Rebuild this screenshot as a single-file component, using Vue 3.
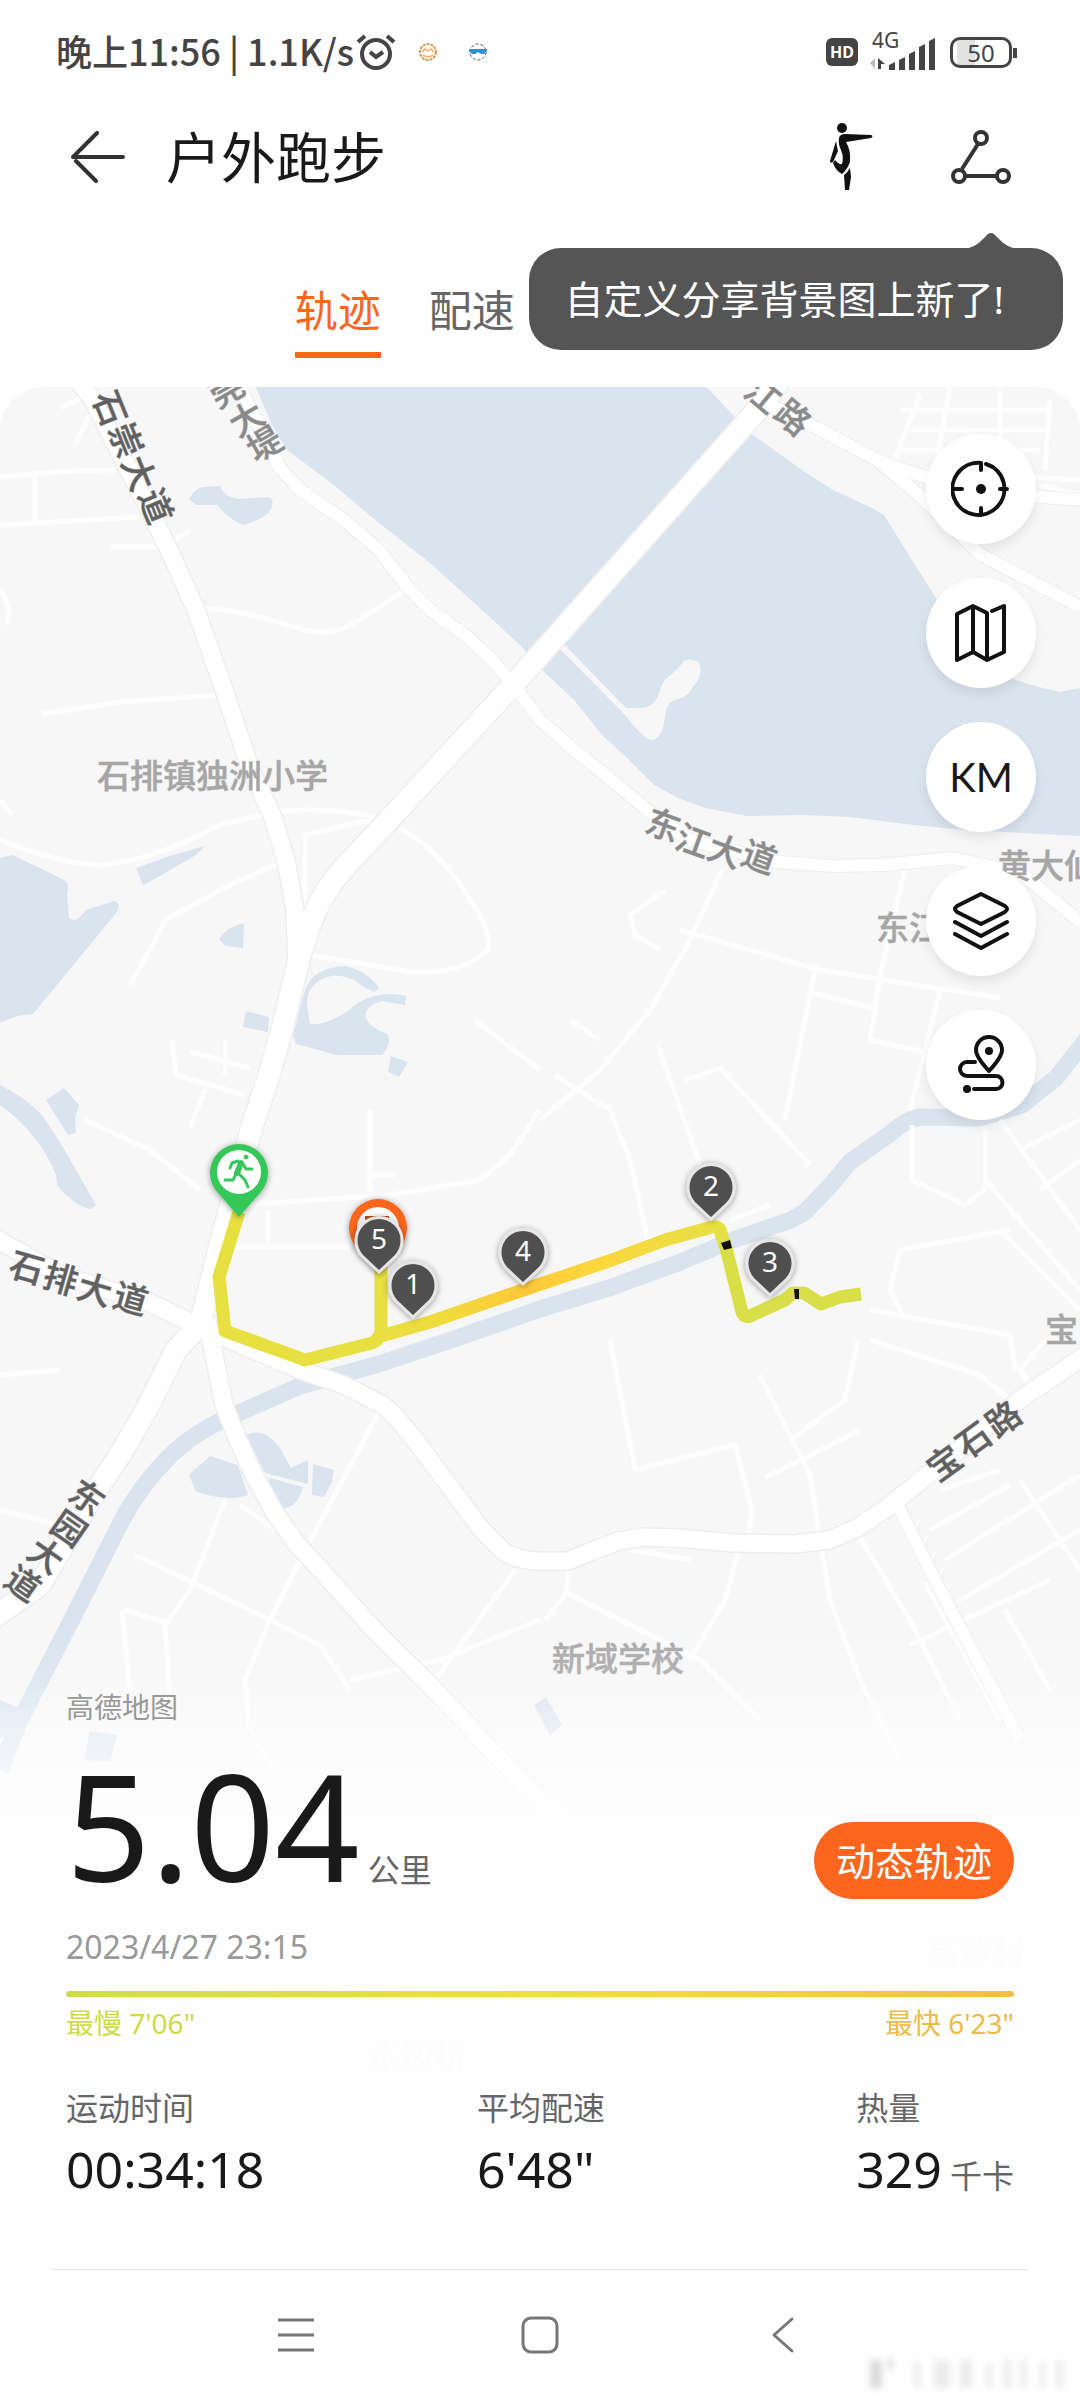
<script setup>
import { ref } from 'vue';

const tabs = ['轨迹', '配速'];
const activeTab = ref('轨迹');

const stats = [
  { label: '运动时间', value: '00:34:18', unit: '' },
  { label: '平均配速', value: '6\'48"', unit: '' },
  { label: '热量', value: '329', unit: '千卡' }
];

// Street names: one centre point per glyph, and the angle the glyphs are turned by
const streets = [
  { text: '石崇大道', angle: 68, tone: 'dark', points: [[110, 408], [126, 440], [139, 473], [156, 506]] },
  { text: '莞大堤', angle: -30, tone: 'mid', points: [[226, 389], [246, 418], [264, 443]] },
  { text: '江路', angle: 40, tone: 'mid', points: [[763, 395], [793, 417]] },
  { text: '东江大道', angle: 20, tone: 'mid', points: [[663, 825], [693, 841], [725, 851], [759, 857]] },
  { text: '石排大道', angle: 16, tone: 'dark', points: [[27, 1267], [61, 1278], [95, 1289], [131, 1298]] },
  { text: '东园大道', angle: 35, tone: 'dark', points: [[87, 1497], [69, 1528], [46, 1555], [23, 1583]] },
  { text: '宝石路', angle: -36, tone: 'dark', points: [[944, 1463], [973, 1440], [1003, 1419]] }
];

const places = [
  { text: '石排镇独洲小学', x: 97, y: 788 },
  { text: '新域学校', x: 552, y: 1671 },
  { text: '黄大仙', x: 998, y: 878 },
  { text: '东江', x: 876, y: 940 },
  { text: '宝', x: 1045, y: 1342 },
  { text: '水边桥', x: 368, y: 2067, faint: true },
  { text: '高埗村', x: 926, y: 1964, faint: true }
];

const pins = [
  { n: 4, x: 523, y: 1252 },
  { n: 2, x: 711, y: 1187 },
  { n: 3, x: 770, y: 1263 },
  { n: 1, x: 413, y: 1285 },
  { n: 5, x: 379, y: 1240 }
];

const glyphSize = 34;

// Turns glyph centres into baseline starting points
const origins = (street, axis) => {
  const a = street.angle * Math.PI / 180;
  const dx = -glyphSize / 2;
  const dy = glyphSize * 0.38;
  return street.points.map(([x, y]) => Math.round(axis === 'x'
    ? x + dx * Math.cos(a) - dy * Math.sin(a)
    : y + dx * Math.sin(a) + dy * Math.cos(a))).join(' ');
};
</script>

<template>
  <div class="screen">
    <div class="status-bar">
      <div class="status-left">
        <span class="clock">晚上11:56 | 1.1K/s</span>
        <svg class="alarm" viewBox="0 0 40 40" width="40" height="40">
          <circle cx="20" cy="22" r="14" fill="none" stroke="#444" stroke-width="4" />
          <path d="M14 20l6 5 7-5M2 10l7-6M38 10l-7-6" fill="none" stroke="#444" stroke-width="4" />
        </svg>
        <svg class="app-dot" viewBox="0 0 20 20" width="20" height="20">
          <circle cx="10" cy="10" r="8" fill="#fffaf4" stroke="#d99a55" stroke-width="2" stroke-dasharray="3 1" />
          <path d="M4 10l3-3 3 2 3-2 3 3M5 13q5 4 10 0" fill="none" stroke="#efb070" stroke-width="1.5" />
        </svg>
        <svg class="app-dot" viewBox="0 0 20 20" width="20" height="20">
          <circle cx="10" cy="10" r="8" fill="#fff" stroke="#556" stroke-width="1" stroke-dasharray="3 2" />
          <path d="M1 7h18v2l-3 3h-3l-3-2-3 2H4L1 9z" fill="#2d93cf" />
        </svg>
      </div>
      <div class="status-right">
        <span class="hd">HD</span>
        <span class="network">
          <span class="network-type">4G</span>
          <svg viewBox="0 0 66 38" width="66" height="38">
            <path d="M0 30l5-5v11z" fill="#bbb" />
            <path d="M8 25l7 6h-4v5H8z" fill="#444" />
            <path d="M19 32l6-3v8h-6zM29 27l6-3v13h-6zM39 21l6-3v19h-6zM49 14l6-3v26h-6zM59 8l6-3v32h-6z" fill="#444" />
          </svg>
        </span>
        <span class="battery">50</span>
      </div>
    </div>

    <header class="title-bar">
      <button class="icon-button" aria-label="返回">
        <svg viewBox="0 0 56 52" width="56" height="52">
          <path d="M53 26H3L27 2M6 30l20 20" fill="none" stroke="#333" stroke-width="4" stroke-linecap="round" stroke-linejoin="round" />
        </svg>
      </button>
      <h1>户外跑步</h1>
      <button class="icon-button" aria-label="舞者">
        <svg viewBox="0 0 44 68" width="44" height="68">
          <g fill="#111">
            <circle cx="12" cy="5" r="5" />
            <path d="M9 15q1-4 6-4l26 1q3 1 0 3L16 19q5 8 4 20-3 8-8 12-6-3-9-11l2-3q4 5 7 4 2-7-1-14-3-6-2-12z" />
            <path d="M6 18q1 6 2 10L3 39q-3 2-3-1z" />
            <path d="M20 45l1 9-2 13h-4l-1-15q4-3 6-7z" />
          </g>
        </svg>
      </button>
      <button class="icon-button share" aria-label="分享">
        <svg viewBox="0 0 62 56" width="62" height="56">
          <path d="M28 15L12 40M16 47h30" fill="none" stroke="#333" stroke-width="4" />
          <g fill="#fff" stroke="#333" stroke-width="4">
            <circle cx="31" cy="9" r="6" />
            <circle cx="9" cy="47" r="6" />
            <circle cx="53" cy="47" r="6" />
          </g>
        </svg>
      </button>
    </header>

    <nav class="tabs">
      <button
        v-for="tab in tabs"
        :key="tab"
        :class="['tab', { active: tab === activeTab }]"
        @click="activeTab = tab"
      >{{ tab }}</button>
      <div class="tooltip">
        <svg viewBox="0 0 56 16" width="56" height="16">
          <path d="M0 16Q12 15 20 6L25 1Q28-1 31 1L36 6Q44 15 56 16Z" fill="#555" />
        </svg>
        自定义分享背景图上新了!
      </div>
    </nav>

    <main class="map-area">
      <svg class="map" viewBox="0 387 1080 1883" preserveAspectRatio="xMidYMin slice">
        <defs>
          <linearGradient id="pace" gradientUnits="userSpaceOnUse" x1="381" y1="0" x2="721" y2="0">
            <stop offset="0" stop-color="#e8e040" />
            <stop offset="0.22" stop-color="#f2d93c" />
            <stop offset="0.42" stop-color="#fdc838" />
            <stop offset="0.62" stop-color="#fdd63c" />
            <stop offset="1" stop-color="#e6e044" />
          </linearGradient>
          <filter id="pin-shadow" x="-30%" y="-30%" width="160%" height="160%">
            <feDropShadow dx="0" dy="1" stdDeviation="3" flood-color="#000" flood-opacity="0.4" />
          </filter>
        </defs>

        <!-- water -->
        <g fill="#d9e4ef">
          <path d="M252 380L257 390 272 425 287 450 330 482 379 523 430 563 482 610 520 645 540 668 574 700 602 735 626 757 654 785 678 798 705 808 747 816 802 815 850 817 905 824 953 829 1022 833 1080 836V688L1060 692 1039 687 1015 680 975 645 936 598 912 560 884 515 872 508 833 490 805 472 753 435 733 415 700 380Z" />
          <path d="M189 499Q196 487 203 487L220 486Q224 497 238 499L269 497Q274 500 272 507 268 518 244 525 232 522 217 505L196 505Z" />
          <path d="M0 858L12 855 40 868 64 880Q70 884 67 894L69 918Q76 924 86 910L114 901Q122 903 117 912L33 1014 17 1016 0 1023Z" />
          <path d="M136 868L170 856 205 846 196 855 160 876 143 885Z" />
          <path d="M219 939Q228 926 244 923L243 948 225 946ZM246 1011L269 1017 268 1032 243 1027Z" />
          <path fill-rule="evenodd" d="M293 1035L305 990Q312 968 345 966 366 970 379 988L374 992 362 986Q350 974 331 976 306 982 307 1006L310 1024Q330 1026 358 1003 380 990 406 996L405 1005 382 1001Q363 1006 366 1018 370 1028 387 1034 393 1042 382 1055L337 1055 296 1044Z" />
          <path d="M391 1056L408 1062 399 1077 388 1072Z" />
          <path d="M0 1085Q26 1098 42 1115L60 1142 96 1205 91 1209Q74 1206 57 1185L56 1175Q40 1134 0 1105ZM46 1100L64 1088 79 1105 75 1118 76 1133 68 1135Z" />
          <path d="M189 1475L210 1456 238 1465 248 1495Q230 1502 196 1492ZM246 1435Q264 1426 280 1448L291 1468 308 1460V1484L265 1473ZM270 1478L303 1487Q298 1508 282 1508L265 1490ZM313 1464L334 1470 332 1482 324 1497 312 1495Z" />
          <path d="M90 1731L117 1735 110 1762 84 1760ZM534 1705L546 1697 562 1725 550 1735ZM0 1700L18 1708 8 1735 0 1738Z" />
          <path d="M60 2090l40-6 10 40-42 6z" />
        </g>
        <path class="canal" d="M1090 1035L1056 1078 1022 1105 980 1118 919 1117Q902 1122 895 1130L850 1162 829 1187 805 1212 791 1220 733 1240 678 1263 609 1288 540 1309 448 1341 379 1364 300 1386 241 1412Q200 1428 172 1454 140 1485 120 1524L69 1625 20 1720 0 1770" />
        <path fill="#f8f7f8" d="M560 640L626 708 643 708Q656 706 660 690 662 680 672 674L681 665Q686 656 698 662 703 667 698 680L691 690Q686 698 674 700 666 704 665 716 663 738 652 740 644 740 626 716L556 645Z" />

        <!-- minor roads -->
        <g class="lanes">
          <path d="M0 477Q60 470 115 470M0 525L140 517M35 477V525M110 547H158L190 532M42 714L120 702 222 695M60 408L88 395M75 445L90 415M0 590Q14 610 6 625M0 800L12 815" />
          <path d="M205 608Q250 612 290 626 330 640 355 622L408 588" />
          <path d="M0 840Q60 864 100 865 150 862 220 825L276 812Q330 805 385 820L360 822 305 835V940M400 828Q440 850 470 900 492 930 488 950 460 975 410 972L310 955" />
          <path d="M285 860L230 885 165 920 150 950 130 985M172 1040L176 1075 245 1095M190 1052L250 1068M225 1040V1075M205 1090L190 1128M475 1020L540 1070M85 1120L150 1150 200 1190M370 1110V1200M370 1175H395M240 1205L390 1195 480 1180 510 1155 540 1110M235 1247H350M268 1210V1245" />
          <path d="M722 870L690 940 650 1010 600 1070 540 1120M665 890L630 915 635 935 660 950M680 930L820 970 1000 998M905 870L880 975 870 1040 925 1052M816 965L785 1120M810 992L872 1008M570 1020L600 1040M555 1075L610 1110 630 1160 648 1240M658 1045L700 1165M685 1080L720 1068 810 1165M940 990L910 1110M730 1220L770 1205M912 1125V1180L965 1205 985 1190V1130" />
          <path d="M870 1310L1010 1335 1015 1370M905 1320L890 1290 900 1250 1010 1230M610 1340L635 1470 735 1445 752 1510 747 1545M760 1375L810 1475 830 1600 860 1680 900 1760M858 1340L845 1400 790 1440M765 1478L860 1430M740 1545L725 1600 690 1660M985 1180L1080 1290M870 1340L980 1375 1010 1400" />
          <path d="M570 1565L565 1595 545 1620M565 1592L700 1660 760 1720M858 1535L910 1620 960 1720M930 1530L1010 1485M945 1560L1080 1475M960 1600L1080 1530M910 1645L1050 1580M1020 1480L1080 1570M925 1582L1000 1720M1005 1610L1050 1690M940 1490L1000 1470M630 1550L690 1560" />
          <path d="M380 1410L300 1560 270 1620 245 1680 250 1730 280 1780M225 1500L190 1590 165 1625 170 1700M135 1555L250 1610 320 1645 350 1690M125 1610L165 1622M122 1610L130 1690M0 1510L60 1525M540 1620L440 1660 350 1680M515 1570L435 1680M240 1505L290 1540M60 1370L0 1375" />
          <path d="M920 395L890 470M900 410H1050M910 430H1050M900 450H1040M1000 387V470M950 387L935 470M1050 400L1045 470M1040 485L1080 495M905 470L1080 480" />
          <path d="M1000 1120L1080 1230M1020 1150L1080 1120M1040 1190L1080 1160M1000 1230L1080 1310M1045 1340L1020 1370 1040 1400" />
        </g>

        <!-- main roads: edge line first, white carriageway over it -->
        <g v-for="layer in ['edge', 'fill']" :key="layer" :class="['roads', layer]">
          <path class="thin" d="M240 387L279 467 300 490 344 520 379 550 406 585 430 610 465 635 492 660 513 685 540 720 574 750 609 778 650 812 690 840 778 862 833 866 884 865 953 858 1022 874 1090 930" />
          <path class="thin" d="M760 400L815 427 877 460 919 495 981 555 1029 580 1090 612M877 460Q960 495 1090 500" />
          <path class="thin" d="M895 1500L940 1590 1020 1740" />
          <path class="mid" d="M-10 1235L60 1275 148 1302 200 1327 300 1370 344 1385 379 1403Q395 1412 430 1460L482 1530 499 1547Q510 1560 540 1561L568 1561 592 1551 619 1541 643 1537 678 1538 733 1543 795 1544 829 1540 857 1528 884 1510 919 1482 1022 1398 1090 1352" />
          <path class="mid" d="M78 380L93 400 152 515 169 550 196 610 224 690 251 770 272 815 286 860 295 910 297 970" />
          <path class="wide" d="M780 380L760 407 513 685 386 823 344 868Q320 895 310 925L300 955 282 1030 269 1075 251 1130 239 1175 220 1245 200 1325 176 1350 145 1412 120 1455 93 1495 40 1585 -10 1620" />
          <path class="mid" d="M207 1320L217 1370 224 1405 238 1440 255 1477 275 1513 296 1543 327 1577 379 1635 430 1685 482 1740 570 1830" />
        </g>

        <!-- labels -->
        <text
          v-for="place in places"
          :key="place.text"
          :class="['place', { faint: place.faint }]"
          :x="place.x"
          :y="place.y"
        >{{ place.text }}</text>
        <text
          v-for="street in streets"
          :key="street.text"
          :class="['street', street.tone]"
          :x="origins(street, 'x')"
          :y="origins(street, 'y')"
          :rotate="street.angle"
        >{{ street.text }}</text>

        <!-- run track -->
        <g fill="none" stroke-width="13" stroke-linejoin="round">
          <path d="M239 1212L219 1277 225 1331 305 1360 372 1343Q380 1340 381 1330V1265" stroke="#e8e040" />
          <path d="M381 1336L430 1322 523 1290 609 1261 665 1240 712 1227Q720 1226 721 1233L725 1246" stroke="url(#pace)" />
          <path d="M724 1240L742 1312Q744 1318 750 1316L785 1300 793 1293H804L821 1304 840 1297 861 1294" stroke="#d9df48" />
        </g>
        <path d="M721 1243l9-3 2 8-8 2zM794 1289h5v10h-4z" fill="#111" />

        <!-- start and finish -->
        <g filter="url(#pin-shadow)">
          <path d="M239 1217L218 1193A29 29 0 1 1 260 1193Z" fill="#35c759" />
          <circle cx="239" cy="1172" r="22" fill="#fff" />
          <path d="M378 1272L357 1248A29 29 0 1 1 399 1248Z" fill="#fb651e" />
          <circle cx="378" cy="1228" r="21" fill="#fff" />
          <path d="M365 1216h24v14h-24z" fill="#c44a1c" />
        </g>
        <g stroke="#35c759" fill="none" stroke-linecap="round" stroke-linejoin="round">
          <circle cx="246" cy="1157" r="2" fill="#35c759" stroke-width="1" />
          <path d="M241 1163L237 1173" stroke-width="6" />
          <path d="M238 1161L232 1163 230 1168M243 1164L246 1169 252 1169M236 1174L233 1180 225 1180M239 1174L245 1180 248 1187" stroke-width="3" />
        </g>

        <g v-for="pin in pins" :key="pin.n">
          <path
            :d="`M${pin.x} ${pin.y + 32}l-17-16a23 23 0 1 1 34 0z`"
            class="pin"
            filter="url(#pin-shadow)"
          />
          <text class="pin-text" :x="pin.x" :y="pin.y + 9">{{ pin.n }}</text>
        </g>
      </svg>

      <div class="tools">
        <button class="tool" aria-label="定位">
          <svg viewBox="0 0 60 60" width="60" height="60">
            <path d="M35 5A26 26 0 1 1 30 4V11M4 30h7M49 30h7M30 49v7" />
            <circle cx="30" cy="30" r="5" fill="#111" stroke="none" />
          </svg>
        </button>
        <button class="tool" aria-label="地图">
          <svg viewBox="0 0 56 60" width="56" height="60">
            <path d="M4 11L20 3 34 10V57L20 49 4 57ZM20 3V49M39 8L51 3V49L34 57" />
          </svg>
        </button>
        <button class="tool km">KM</button>
        <button class="tool" aria-label="图层">
          <svg viewBox="0 0 56 60" width="56" height="60">
            <path d="M28 3L52 15Q56 18 52 21L28 33 4 21Q0 18 4 15ZM2 31L28 45 54 31M2 43L28 57 54 43" />
          </svg>
        </button>
        <button class="tool" aria-label="路线">
          <svg viewBox="0 0 56 60" width="56" height="60">
            <path d="M36 36Q23 22 23 15A13 13 0 0 1 49 15Q49 22 36 36ZM22 27H14A6 6 0 0 0 14 41H43A6 6 0 0 1 43 54H21" />
            <circle cx="36" cy="16" r="4" fill="#111" stroke="none" />
            <circle cx="14" cy="54" r="4" fill="#111" stroke="none" />
          </svg>
        </button>
      </div>

      <section class="summary">
        <p class="provider">高德地图</p>
        <div class="distance-row">
          <p class="distance"><span class="distance-value">5.04</span><span class="unit">公里</span></p>
          <button class="replay">动态轨迹</button>
        </div>
        <p class="date">2023/4/27 23:15</p>
        <div class="pace-bar"></div>
        <div class="pace-labels">
          <span class="slow">最慢 7'06"</span>
          <span class="fast">最快 6'23"</span>
        </div>
        <dl class="stats">
          <div v-for="stat in stats" :key="stat.label">
            <dt>{{ stat.label }}</dt>
            <dd>{{ stat.value }}<span v-if="stat.unit" class="unit">{{ stat.unit }}</span></dd>
          </div>
        </dl>
      </section>
    </main>

    <footer class="system-nav">
      <button class="icon-button" aria-label="菜单">
        <svg viewBox="0 0 40 40" width="40" height="40">
          <path d="M2 5h36M2 20h36M2 35h36" fill="none" stroke="#777" stroke-width="3" />
        </svg>
      </button>
      <button class="icon-button" aria-label="主页">
        <svg viewBox="0 0 40 40" width="40" height="40">
          <rect x="3" y="3" width="34" height="34" rx="8" fill="none" stroke="#777" stroke-width="3" />
        </svg>
      </button>
      <button class="icon-button" aria-label="后退">
        <svg viewBox="0 0 40 40" width="40" height="40">
          <path d="M28 4L10 20 28 36" fill="none" stroke="#777" stroke-width="3" stroke-linecap="round" stroke-linejoin="round" />
        </svg>
      </button>
      <svg class="smudge" viewBox="0 0 210 36" width="210" height="36">
        <path fill="#dcdcdc" d="M8 4h12v28H8zM26 2h5v12h-5z" />
        <path fill="#ececec" d="M52 6h6v26h-6zM72 4h16v28H72zM98 4h12v28H98zM124 8h6v24h-6zM142 4h7v28h-7zM158 4h6v28h-6zM178 6h5v26h-5zM194 4h7v28h-7z" />
      </svg>
    </footer>
  </div>
</template>

<style>
body {
  margin: 0;
  background: #fefefe;
}
</style>

<style scoped>
.screen {
  display: flex;
  flex-direction: column;
  min-height: 100vh;
  background: #fefefe;
  color: #191919;
  font-family: "Noto Sans", "Noto Sans CJK SC", sans-serif;
}

button {
  padding: 0;
  border: 0;
  background: none;
  color: inherit;
  font: inherit;
  cursor: pointer;
}

svg {
  display: block;
}

p,
dl,
dd,
h1 {
  margin: 0;
}

/* Status bar */
.status-bar {
  display: flex;
  justify-content: space-between;
  align-items: center;
  padding: 32px 68px 0 56px;
  line-height: 40px;
  color: #444;
}

.status-left,
.status-right {
  display: flex;
  align-items: center;
}

.clock {
  font-family: "Noto Sans CJK SC", sans-serif;
  font-size: 36px;
  font-weight: 500;
  line-height: 36px;
  padding-bottom: 4px;
}

.alarm {
  margin-left: 2px;
}

.app-dot {
  margin-left: 22px;
}

.app-dot + .app-dot {
  margin-left: 30px;
}

.hd {
  padding: 0 4px;
  border-radius: 6px;
  background: #444;
  color: #fff;
  font-size: 16px;
  font-weight: 700;
  line-height: 28px;
}

.network {
  position: relative;
  margin: 0 14px 0 12px;
}

.network-type {
  position: absolute;
  top: -3px;
  left: 2px;
  font-size: 21px;
  line-height: 20px;
}

.battery {
  position: relative;
  width: 56px;
  border: 3px solid #444;
  border-radius: 10px;
  background: linear-gradient(90deg, #fff 4px, #e2e2e2 4px, #e2e2e2 40%, #fff 40%);
  font-size: 24px;
  line-height: 25px;
  text-align: center;
}

.battery::after {
  content: "";
  position: absolute;
  top: 8px;
  right: -8px;
  width: 4px;
  height: 10px;
  background: #444;
}

/* Title bar */
.title-bar {
  display: flex;
  align-items: center;
  gap: 40px;
  padding: 44px 68px 0 70px;
  height: 82px;
}

.title-bar h1 {
  flex: 1;
  font-size: 55px;
  font-weight: 400;
  line-height: 80px;
}

.title-bar .share {
  margin-left: 36px;
}

/* Tabs */
.tabs {
  position: relative;
  display: flex;
  gap: 48px;
  padding: 80px 0 29px 27.3%;
}

.tab {
  padding-bottom: 8px;
  border-bottom: 6px solid transparent;
  color: #666;
  font-size: 43px;
  line-height: 66px;
}

.tab.active {
  border-image: linear-gradient(#fb651e, #fb651e) 6;
  color: #fb651e;
}

.tooltip {
  position: absolute;
  top: 50px;
  right: 17px;
  padding: 0 59px 0 36px;
  border-radius: 32px;
  background: #555;
  color: #fff;
  font-size: 39px;
  line-height: 102px;
}

.tooltip svg {
  position: absolute;
  top: -15px;
  right: 44px;
}

/* Map */
.map-area {
  position: relative;
  display: flex;
  flex: 1;
  flex-direction: column;
  justify-content: space-between;
  overflow: hidden;
  border-radius: 44px 44px 0 0;
  background: #f8f7f8;
}

.map {
  position: absolute;
  inset: 0;
  width: 100%;
  height: 100%;
}

.canal {
  fill: none;
  stroke: #d9e4ef;
  stroke-width: 17;
  stroke-linejoin: round;
}

.lanes {
  fill: none;
  stroke: #fdfdfd;
  stroke-width: 5;
  stroke-linejoin: round;
}

.roads {
  fill: none;
  stroke-linejoin: round;
}

.roads.edge {
  stroke: #eee;
}

.roads.fill {
  stroke: #fff;
}

.edge .thin {
  stroke-width: 14;
}

.edge .mid {
  stroke-width: 20;
}

.edge .wide {
  stroke-width: 24;
}

.fill .thin {
  stroke-width: 12;
}

.fill .mid {
  stroke-width: 17;
}

.fill .wide {
  stroke-width: 21;
}

.place,
.street {
  font-family: "Noto Sans CJK SC", sans-serif;
  font-weight: 500;
  stroke-width: 1;
  stroke-opacity: 0.5;
}

.place {
  fill: #a6a6a6;
  stroke: #a6a6a6;
  font-size: 33px;
}

.place.faint {
  fill: #c4c4c4;
  stroke: #c4c4c4;
}

.street {
  font-size: 34px;
}

.street.dark {
  fill: #606060;
  stroke: #606060;
}

.street.mid {
  fill: #8a8a8a;
  stroke: #8a8a8a;
}

.pin {
  fill: #505050;
  stroke: #e6e6e6;
  stroke-width: 3;
}

.pin-text {
  fill: #fff;
  font-size: 28px;
  text-anchor: middle;
}

.tools {
  position: relative;
  display: flex;
  flex-direction: column;
  align-items: flex-end;
  gap: 34px;
  padding: 47px 44px;
}

.tool {
  display: flex;
  align-items: center;
  justify-content: center;
  width: 110px;
  height: 110px;
  border-radius: 50%;
  background: #fff;
  box-shadow: 0 6px 12px rgba(0, 0, 0, 0.08);
}

.tool svg {
  fill: none;
  stroke: #111;
  stroke-width: 4;
  stroke-linecap: round;
  stroke-linejoin: round;
}

.tool.km {
  font-family: Lato, sans-serif;
  font-size: 40px;
}

/* Summary */
.summary {
  position: relative;
  padding: 70px 66px 64px;
  background: linear-gradient(rgba(254, 254, 254, 0), rgba(254, 254, 254, 0.15) 60px, rgba(254, 254, 254, 0.6) 130px, rgba(254, 254, 254, 0.92) 200px, rgba(254, 254, 254, 0.96) 280px);
}

.provider {
  color: #999;
  font-size: 28px;
  line-height: 40px;
}

.distance-row {
  display: flex;
  align-items: center;
  justify-content: space-between;
}

.distance {
  display: flex;
  align-items: baseline;
}

.distance-value {
  font-size: 148px;
  line-height: 196px;
}

.unit {
  margin-left: 8px;
  color: #666;
  font-size: 32px;
  line-height: 40px;
}

.replay {
  margin-top: 70px;
  padding: 0 22px;
  border-radius: 39px;
  background: #fb651e;
  color: #fff;
  font-size: 39px;
  line-height: 77px;
}

.date {
  color: #999;
  font-size: 32px;
  line-height: 48px;
}

.pace-bar {
  height: 6px;
  margin: 20px 0 8px;
  border-radius: 3px;
  background: linear-gradient(90deg, #cddc50, #f0e040 50%, #f5bd45);
}

.pace-labels {
  display: flex;
  justify-content: space-between;
  font-size: 28px;
  line-height: 36px;
}

.slow {
  color: #cddc45;
}

.fast {
  color: #efbb45;
}

.stats {
  display: grid;
  grid-template-columns: 13fr 12fr auto;
  margin-top: 42px;
}

.stats dt {
  color: #666;
  font-size: 32px;
  line-height: 50px;
}

.stats dd {
  font-size: 50px;
  line-height: 72px;
}

/* System navigation */
.system-nav {
  position: relative;
  display: flex;
  justify-content: center;
  gap: 204px;
  margin: 0 52px;
  padding: 45px 0;
  border-top: 1px solid #e4e4e4;
}

.smudge {
  position: absolute;
  right: -44px;
  bottom: 8px;
  filter: blur(3px);
}
</style>
